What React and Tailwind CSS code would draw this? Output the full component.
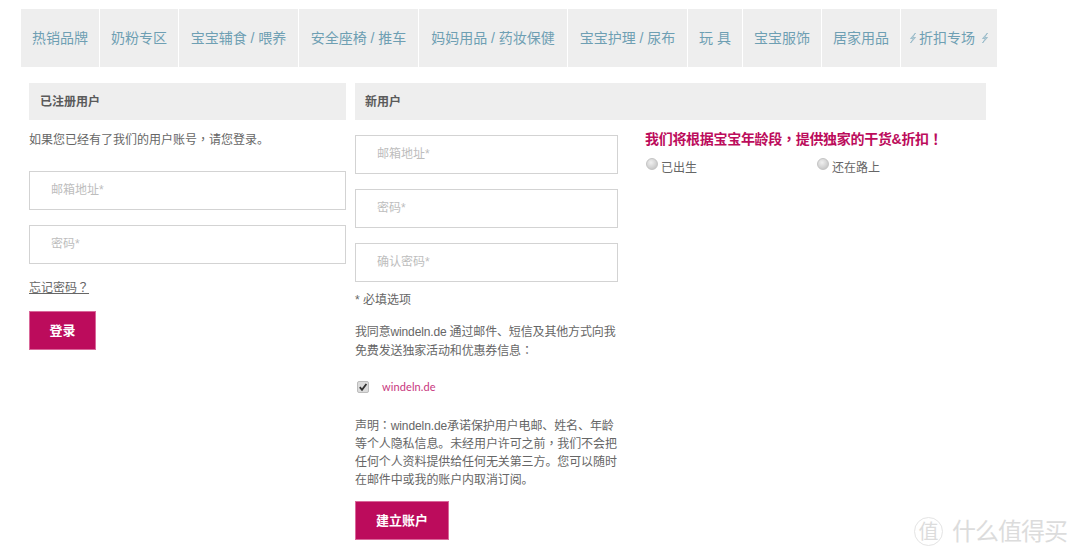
import React from 'react';

const navItems = [
  { label: '热销品牌', cls: 'w-[78px]' },
  { label: '奶粉专区', cls: 'w-[78px]' },
  { label: '宝宝辅食 / 喂养', cls: 'w-[119px]' },
  { label: '安全座椅 / 推车', cls: 'w-[119px]' },
  { label: '妈妈用品 / 药妆保健', cls: 'w-[148px]' },
  { label: '宝宝护理 / 尿布', cls: 'w-[119px]' },
  { label: '玩 具', cls: 'w-[54px]' },
  { label: '宝宝服饰', cls: 'w-[78px]' },
  { label: '居家用品', cls: 'w-[78px]' },
];

// centred full-width punctuation, as in the reference
function Pn({ children }) {
  return <span className="font-['Noto_Sans_CJK_TC'] leading-none">{children}</span>;
}

function Bolt() {
  return (
    <svg viewBox="0 0 8 12" className="inline-block h-3 w-2">
      <path d="M6.5 1 1.5 6.5h3L1.5 11l5-5.5h-3z" fill="none" stroke="#8db4c4" strokeWidth="0.8" />
    </svg>
  );
}

function Field({ placeholder, type = 'text' }) {
  return (
    <input
      type={type}
      placeholder={placeholder}
      className="block w-full h-[39px] border border-[#d3d3d3] bg-white pl-[21px] pb-[2px] text-xs outline-none placeholder:text-[#bdbdbd]"
    />
  );
}

function Radio({ label, cls }) {
  return (
    <label className={`flex items-start gap-[3px] ${cls}`}>
      <input
        type="radio"
        name="stage"
        className="size-3 appearance-none rounded-full border border-[#c4c4c4] bg-[radial-gradient(circle_at_40%_35%,#f0f0f0,#bcbcbc)]"
      />
      <span className="mt-[2px]">{label}</span>
    </label>
  );
}

export default function App() {
  return (
    <div
      className="relative w-[1080px] h-[557px] overflow-hidden bg-white pt-[9px] text-xs text-[#666]"
      style={{ fontFamily: '"Liberation Sans", "Noto Sans CJK SC", sans-serif' }}
    >
      {/* Top nav */}
      <div className="ml-[21px] flex gap-px w-[977px]">
        {navItems.map((item) => (
          <div
            key={item.label}
            className={`${item.cls} h-[58px] shrink-0 bg-[#eeeeee] flex items-center justify-center text-sm text-[#6e9fb3]`}
          >
            <span className="whitespace-nowrap">{item.label}</span>
          </div>
        ))}
        <div className="w-[96px] h-[58px] shrink-0 bg-[#eeeeee] flex items-center justify-center gap-[2px] text-sm text-[#6e9fb3]">
          <Bolt />
          <span className="whitespace-nowrap">折扣专场</span>
          <span className="w-[2px]" />
          <Bolt />
        </div>
      </div>

      <div className="mt-4 ml-[29px] flex gap-[9px]">
        {/* Login */}
        <div className="w-[317px]">
          <div className="h-[37px] bg-[#eeeeee] flex items-center pl-[11px] font-bold text-[#5a5a5a]">已注册用户</div>
          <p className="mt-[11px] leading-[18px]">如果您已经有了我们的用户账号<Pn>，</Pn>请您登录。</p>
          <div className="mt-[22px] flex flex-col gap-[15px]">
            <Field placeholder="邮箱地址*" />
            <Field placeholder="密码*" type="password" />
          </div>
          <a className="mt-[15px] block w-fit underline leading-[18px]">忘记密码<Pn>？</Pn></a>
          <button className="mt-[14px] block w-[67px] h-[39px] border border-[#d9689a] bg-[#bc0c5c] text-[13px] font-bold text-white">
            登录
          </button>
        </div>

        {/* Register */}
        <div className="w-[631px]">
          <div className="h-[37px] bg-[#eeeeee] flex items-center pl-[10px] font-bold text-[#5a5a5a]">新用户</div>
          <div className="mt-[15px] flex">
            <div className="w-[263px]">
              <div className="flex flex-col gap-[15px]">
                <Field placeholder="邮箱地址*" />
                <Field placeholder="密码*" type="password" />
                <Field placeholder="确认密码*" type="password" />
              </div>
              <p className="mt-[9px] leading-[18px]">* 必填选项</p>
              <p className="mt-[14px] leading-[19px] whitespace-nowrap tracking-[-0.15px]">
                我同意windeln.de 通过邮件、短信及其他方式向我<br />免费发送独家活动和优惠券信息<Pn>：</Pn>
              </p>
              <div className="mt-[20px] flex items-center h-[12px]">
                <span className="relative ml-[2px] size-3">
                  <input
                    type="checkbox"
                    defaultChecked
                    className="block size-3 appearance-none rounded-[2px] border border-[#bdbdbd] bg-[#dcdcdc]"
                  />
                  <svg viewBox="0 0 12 12" className="absolute inset-0 size-3">
                    <path d="M2.8 6.2 5 8.8 9.4 3" fill="none" stroke="#333" strokeWidth="1.8" />
                  </svg>
                </span>
                <span className="ml-[13px] text-[11px] tracking-[0.1px] text-[#c8387e] font-['Lato']">windeln.de</span>
              </div>
              <p className="mt-[24px] leading-[18px] whitespace-nowrap tracking-[-0.1px]">
                声明<Pn>：</Pn>windeln.de承诺保护用户电邮、姓名、年龄<br />
                等个人隐私信息。未经用户许可之前<Pn>，</Pn>我们不会把<br />
                任何个人资料提供给任何无关第三方。您可以随时<br />
                在邮件中或我的账户内取消订阅。
              </p>
              <button className="mt-3 block w-[94px] h-[39px] border border-[#d9689a] bg-[#bc0c5c] text-[13px] font-bold text-white">
                建立账户
              </button>
            </div>

            {/* Baby stage */}
            <div className="ml-[27px] flex-1">
              <p className="-mt-[5px] text-sm font-bold leading-[18px] tracking-[-0.3px] text-[#bc0c5c] whitespace-nowrap">
                我们将根据宝宝年龄段<Pn>，</Pn>提供独家的干货&amp;折扣<Pn>！</Pn>
              </p>
              <div className="mt-[10px] flex pl-px">
                <Radio label="已出生" cls="w-[171px]" />
                <Radio label="还在路上" cls="w-[100px]" />
              </div>
            </div>
          </div>
        </div>
      </div>

      {/* Watermark */}
      <div className="absolute left-[914px] top-[517px] flex items-center text-[#dcdcdc]">
        <span className="flex size-[29px] items-center justify-center rounded-full border border-[#e4e4e4] text-xl">值</span>
        <span className="ml-[9px] text-[24px] leading-none tracking-[-1px]">什么值得买</span>
      </div>
    </div>
  );
}
